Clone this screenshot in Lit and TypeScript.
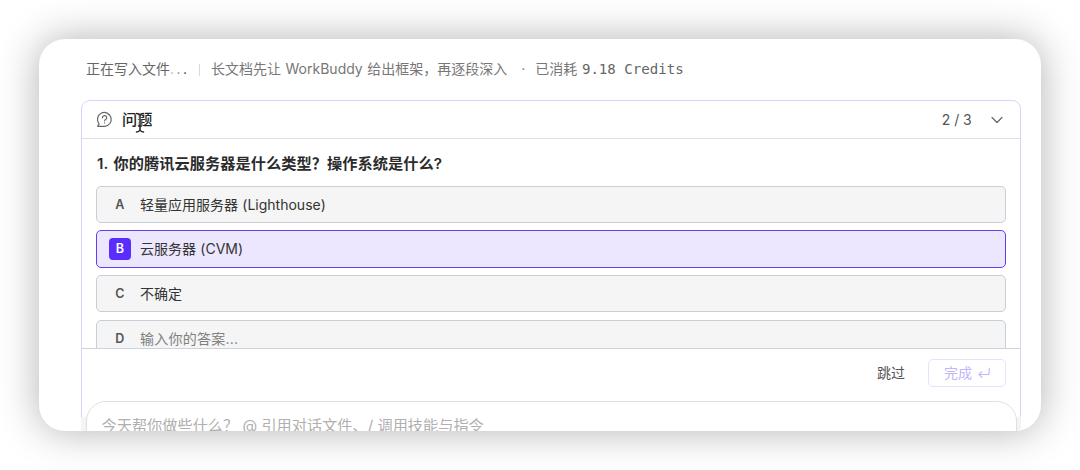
import { css, html, LitElement, svg } from "lit";
import { customElement, property } from "lit/decorators.js";
import { classMap } from "lit/directives/class-map.js";

interface Option {
	key: string;
	label: string;
	selected?: boolean;
	custom?: boolean;
}

const OPTIONS: Option[] = [
	{ key: "A", label: "轻量应用服务器 (Lighthouse)" },
	{ key: "B", label: "云服务器 (CVM)", selected: true },
	{ key: "C", label: "不确定" },
	{ key: "D", label: "输入你的答案...", custom: true },
];

@customElement("option-row")
export class OptionRow extends LitElement {
	@property({ attribute: false })
	option!: Option;

	static styles = css`
		:host {
			display: block;
		}

		.row {
			box-sizing: border-box;
			height: 37.5px;
			display: flex;
			align-items: center;
			gap: 9px;
			padding: 0.6px 12px 0;
			border: 1px solid #c6ced8;
			border-radius: 5px;
			background: #f5f5f5;
			color: #333;
			font-size: 14px;
			word-spacing: 0.4px;
		}

		.row.selected {
			border-color: #6240f0;
			background: #ece7ff;
		}

		.row.custom {
			color: #808080;
		}

		.custom .label {
			letter-spacing: 0.25px;
		}

		.key {
			width: 21.5px;
			height: 21.5px;
			display: flex;
			align-items: center;
			justify-content: center;
			border-radius: 4px;
			color: #555;
			font-size: 12.5px;
			font-weight: 600;
		}

		.label {
			margin-left: 0.5px;
		}

		.selected .key {
			background: #5a2dfa;
			color: #fff;
		}
	`;

	render() {
		const { key, label, selected = false, custom = false } = this.option;
		return html`
			<div class=${classMap({ row: true, selected, custom })}>
				<span class="key">${key}</span>
				<span class="label">${label}</span>
			</div>
		`;
	}
}

@customElement("app-root")
export class AppRoot extends LitElement {
	static styles = css`
		:host {
			display: block;
			box-sizing: border-box;
			height: 470px;
			padding: 39px 39px 0;
			overflow: hidden;
			background: #fff;
			font-family: Inter, "Noto Sans CJK SC", sans-serif;
			font-size: 14px;
			line-height: 20px;
			white-space: nowrap;
		}

		.window {
			box-sizing: border-box;
			width: 1002px;
			height: 392px;
			padding: 20px 20px 0 42px;
			overflow: hidden;
			border-radius: 26px;
			background: #fff;
			box-shadow: 0 0 40px rgba(0, 0, 0, 0.31);
		}

		.status {
			height: 20px;
			display: flex;
			align-items: center;
			padding-left: 5px;
			color: #777;
		}

		.writing {
			color: #666;
		}

		.dots {
			width: 19px;
			letter-spacing: 2.4px;
			color: #444;
		}

		.dots .faint {
			color: #bbb;
		}

		.dots .mid {
			color: #888;
		}

		.divider {
			width: 1px;
			height: 12px;
			margin: 2px 11px 0 10px;
			background: #d9d9e2;
		}

		.message {
			word-spacing: 0.6px;
		}

		.sep {
			margin: 0 8px 0 14px;
		}

		.used {
			margin-left: 2px;
		}

		.mono {
			margin-left: 4.6px;
			font-family: "DejaVu Sans Mono", monospace;
			font-size: 14.1px;
			color: #666;
		}

		.panel {
			box-sizing: border-box;
			width: 940px;
			height: 317px;
			margin-top: 21px;
			border: 1px solid #dad3ff;
			border-bottom: 0;
			border-radius: 9px 9px 0 0;
		}

		.header {
			box-sizing: border-box;
			height: 37.5px;
			display: flex;
			align-items: center;
			padding: 1px 14px 0;
			border-bottom: 1px solid #dde0e6;
		}

		.title {
			flex: 1;
			margin-left: 9px;
			font-size: 15.2px;
			font-weight: 500;
			color: #222;
		}

		.count {
			margin-right: 16px;
			font-size: 14px;
			letter-spacing: 0.3px;
			word-spacing: -0.7px;
			color: #555;
		}

		.body {
			box-sizing: border-box;
			height: 210.5px;
			padding: 14px 14px 0;
			overflow: hidden;
			border-bottom: 1px solid #ccd3dc;
		}

		.question {
			height: 22px;
			margin: 0 0 11px 1px;
			line-height: 22px;
			font-size: 15.2px;
			font-weight: 600;
			letter-spacing: 0.06px;
			word-spacing: 1.6px;
			color: #2b2b2b;
		}

		.options {
			display: flex;
			flex-direction: column;
			gap: 7.2px;
		}

		.footer {
			height: 47px;
			display: flex;
			align-items: center;
			justify-content: flex-end;
			gap: 23px;
			padding-right: 14px;
			color: #555;
		}

		.done {
			box-sizing: border-box;
			width: 78px;
			height: 28px;
			display: flex;
			align-items: center;
			justify-content: center;
			gap: 5px;
			padding-left: 1px;
			border: 1px solid #e7e1ff;
			border-radius: 5px;
			color: #c3b5fd;
		}

		/* grey page strip that shows on both sides of the composer */
		.dock {
			display: flex;
			align-items: flex-start;
			width: 940px;
			height: 14px;
			background: #f4f4f4;
		}

		.composer {
			box-sizing: border-box;
			width: 931px;
			height: 60px;
			margin: -16px 0 0 4.5px;
			padding: 14px 15px;
			border: 1px solid #e0e0e0;
			border-radius: 20px;
			background: #fff;
			font-size: 15.2px;
			color: #b0b0b0;
		}

		svg {
			display: block;
			fill: none;
			stroke: currentColor;
			stroke-linecap: round;
			stroke-linejoin: round;
			flex: none;
		}

		.help,
		.chevron {
			color: #666;
		}

		.cursor {
			position: absolute;
			left: 134px;
			top: 112px;
		}
	`;

	renderCursor() {
		const beam = svg`<path d="M2.5 1.5Q5 1.5 6 3.5Q7 1.5 9.5 1.5M6 3.5V18M2.5 20Q5 20 6 18Q7 20 9.5 20M4.5 14H7.5" />`;
		return html`
			<svg class="cursor" width="12" height="22" viewBox="0 0 12 22">
				<g stroke="#fff" stroke-width="2.4">${beam}</g>
				<g stroke="#222" stroke-width="1.5">${beam}</g>
			</svg>
		`;
	}

	render() {
		return html`
			<div class="window">
				<div class="status">
					<span class="writing">正在写入文件</span>
					<span class="dots"><span class="faint">.</span><span class="mid">.</span>.</span>
					<span class="divider"></span>
					<span class="message">长文档先让 WorkBuddy 给出框架，再逐段深入</span>
					<span class="sep">·</span>
					<span class="used">已消耗</span>
					<span class="mono">9.18 Credits</span>
				</div>
				<div class="panel">
					<div class="header">
						<svg class="help" width="17" height="17" viewBox="0 0 17 17" stroke-width="1.2">
							<path d="M3.1 12.9A6.9 6.9 0 1 1 8.6 15.3H2Q1.4 15.2 1.9 14.6Z" />
							<path d="M6.5 6.8A2.1 2.1 0 1 1 9.6 8.5Q8.6 9 8.6 9.8M8.6 11.9V12" />
						</svg>
						<span class="title">问题</span>
						<span class="count">2 / 3</span>
						<svg class="chevron" width="18" height="18" viewBox="0 0 18 18" stroke-width="1.2">
							<path d="M4 6.5L9 11.5L14 6.5" />
						</svg>
					</div>
					<div class="body">
						<div class="question">1. 你的腾讯云服务器是什么类型？操作系统是什么?</div>
						<div class="options">
							${OPTIONS.map((option) => html`<option-row .option=${option}></option-row>`)}
						</div>
					</div>
					<div class="footer">
						<span>跳过</span>
						<span class="done">
							<span>完成</span>
							<svg width="14" height="14" viewBox="0 0 14 14" stroke-width="1.1">
								<path d="M12.2 2V6.5Q12.2 8.5 10.2 8.5H2M4.8 5.7L2 8.5L4.8 11.3" />
							</svg>
						</span>
					</div>
				</div>
				<div class="dock">
					<div class="composer">今天帮你做些什么？ @ 引用对话文件、/ 调用技能与指令</div>
				</div>
			</div>
			${this.renderCursor()}
		`;
	}
}

declare global {
	interface HTMLElementTagNameMap {
		"option-row": OptionRow;
		"app-root": AppRoot;
	}
}
